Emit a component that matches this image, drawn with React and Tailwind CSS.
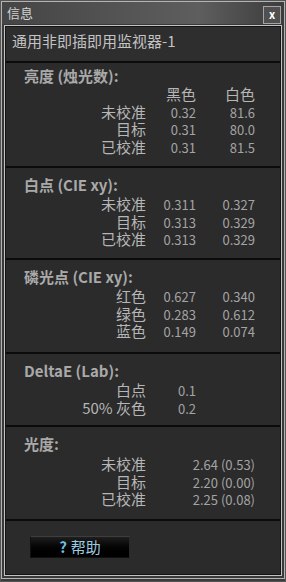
import React from "react";

function Sep() {
  return <div className="h-[2px] bg-[#0b0b0b] shrink-0" />;
}

function Title({ children }) {
  return (
    <div className="pl-[18px] text-[15px] font-bold leading-[18px] h-[18px] text-[#a9a9a9] whitespace-nowrap">
      {children}
    </div>
  );
}

function Row({ label, a, b, wide }) {
  return (
    <div className="grid grid-cols-[140px_50px_59px] items-baseline leading-[17.5px] h-[17.5px] whitespace-nowrap">
      <div className="text-right text-[15px] text-[#b6b6b6]">{label}</div>
      {wide ? (
        <div className="col-span-2 text-right text-[13px] text-[#a4a4a4]">{wide}</div>
      ) : (
        <>
          <div className="text-right text-[13px] text-[#a4a4a4]">{a}</div>
          <div className="text-right text-[13px] text-[#a4a4a4]">{b}</div>
        </>
      )}
    </div>
  );
}

export default function App() {
  return (
    <div className="w-[286px] h-[582px] bg-[#3a3a3a] border border-[#555555] pb-[2px] font-['Noto_Sans_CJK_SC',sans-serif] overflow-hidden">
      <div className="h-full border border-[#b4b4b4] flex flex-col">
        {/* title bar */}
        <div className="h-[22px] shrink-0 flex items-center justify-between pl-[5px] pr-[3px] bg-linear-to-r from-[#454545] via-[#5e5e5e] via-70% to-[#3c3c3c]">
          <span className="text-[13px] leading-[16px] text-[#d2d2d2]">信息</span>
          <div className="w-[18px] h-[18px] mt-[3px] border border-[#a5a5a5] bg-[#505050] flex items-center justify-center">
            <span className="text-[11px] leading-[11px] font-bold text-white">x</span>
          </div>
        </div>
        {/* panel */}
        <div className="flex-1 mx-[2px] mt-[1px] mb-[2px] border border-[#c2c2c2] flex flex-col">
          <div className="flex-1 border border-[#151515] bg-[#2b2b2b] flex flex-col">
            <div className="h-[34px] shrink-0 pt-[4px] pl-[6px] bg-[#2e2e2e] text-[15px] leading-[20px] text-[#c3c3c3] whitespace-nowrap">
              通用非即插即用监视器-1
            </div>
            <Sep />
            <div className="h-[103px] shrink-0 pt-[4px]">
              <Title>亮度 (烛光数):</Title>
              <div className="grid grid-cols-[140px_50px_59px] items-baseline leading-[17.5px] h-[17.5px]">
                <div />
                <div className="text-right text-[15px] text-[#b6b6b6]">黑色</div>
                <div className="text-right text-[15px] text-[#b6b6b6]">白色</div>
              </div>
              <Row label="未校准" a="0.32" b="81.6" />
              <Row label="目标" a="0.31" b="80.0" />
              <Row label="已校准" a="0.31" b="81.5" />
            </div>
            <Sep />
            <div className="h-[90px] shrink-0 pt-[8px]">
              <Title>白点 (CIE xy):</Title>
              <div className="mt-[1px]">
                <Row label="未校准" a="0.311" b="0.327" />
                <Row label="目标" a="0.313" b="0.329" />
                <Row label="已校准" a="0.313" b="0.329" />
              </div>
            </div>
            <Sep />
            <div className="h-[92px] shrink-0 pt-[8px]">
              <Title>磷光点 (CIE xy):</Title>
              <div className="mt-[1px]">
                <Row label="红色" a="0.627" b="0.340" />
                <Row label="绿色" a="0.283" b="0.612" />
                <Row label="蓝色" a="0.149" b="0.074" />
              </div>
            </div>
            <Sep />
            <div className="h-[71px] shrink-0 pt-[8px]">
              <Title>DeltaE (Lab):</Title>
              <div className="mt-[1px]">
                <Row label="白点" a="0.1" b="" />
                <Row label="50% 灰色" a="0.2" b="" />
              </div>
            </div>
            <Sep />
            <div className="h-[92px] shrink-0 pt-[8px]">
              <Title>光度:</Title>
              <div className="mt-[2px]">
                <Row label="未校准" wide="2.64 (0.53)" />
                <Row label="目标" wide="2.20 (0.00)" />
                <Row label="已校准" wide="2.25 (0.08)" />
              </div>
            </div>
            <Sep />
            <div className="flex-1 pt-[15px] pl-[24px]">
              <div className="w-[100px] h-[22px] border border-[#111111] border-t-[#3e3e3e] border-r-[#2a2a2a] bg-linear-to-b from-[#1e1e1e] to-[#000000] flex items-center justify-center gap-[4px]">
                <span className="text-[15px] leading-[18px] font-bold text-[#6cc0e2]">?</span>
                <span className="text-[15px] leading-[18px] text-[#9ccbe0]">帮助</span>
              </div>
            </div>
          </div>
        </div>
      </div>
    </div>
  );
}
